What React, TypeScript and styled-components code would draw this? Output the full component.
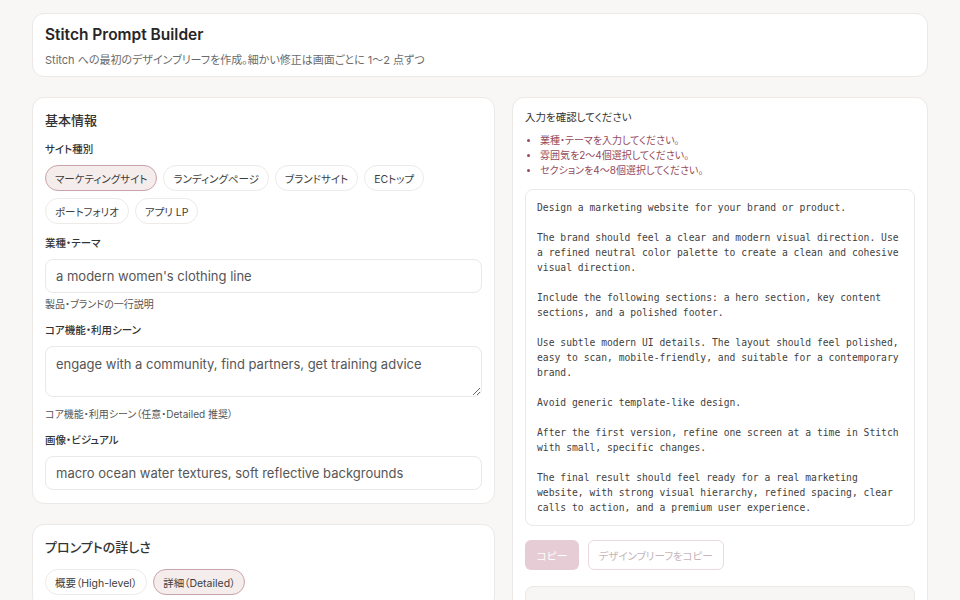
import React, { useState } from 'react';
import styled, { createGlobalStyle } from 'styled-components';

const GlobalStyle = createGlobalStyle`
  * { box-sizing: border-box; }
  body {
    margin: 0;
    background: #f8f7f6;
    font-family: Inter, 'Noto Sans CJK JP', sans-serif;
    color: #2a2a2a;
  }
`;

const siteTypes = ['マーケティングサイト', 'ランディングページ', 'ブランドサイト', 'ECトップ', 'ポートフォリオ', 'アプリ LP'];
const detailLevels = ['概要（High-level）', '詳細（Detailed）'];
const errors = [
  '業種・テーマを入力してください。',
  '雰囲気を2〜4個選択してください。',
  'セクションを4〜8個選択してください。',
];

const prompt = `Design a marketing website for your brand or product.

The brand should feel a clear and modern visual direction. Use
a refined neutral color palette to create a clean and cohesive
visual direction.

Include the following sections: a hero section, key content
sections, and a polished footer.

Use subtle modern UI details. The layout should feel polished,
easy to scan, mobile-friendly, and suitable for a contemporary
brand.

Avoid generic template-like design.

After the first version, refine one screen at a time in Stitch
with small, specific changes.

The final result should feel ready for a real marketing
website, with strong visual hierarchy, refined spacing, clear
calls to action, and a premium user experience.`;

const App = () => {
  const [siteType, setSiteType] = useState('マーケティングサイト');
  const [detail, setDetail] = useState('詳細（Detailed）');

  return (
    <Page>
      <GlobalStyle />
      <Header>
        <Title>Stitch Prompt Builder</Title>
        <Subtitle>Stitch への最初のデザインブリーフを作成。細かい修正は画面ごとに 1〜2 点ずつ</Subtitle>
      </Header>
      <Columns>
        <Stack>
          <Card>
            <SectionTitle>基本情報</SectionTitle>
            <Field>
              <Label>サイト種別</Label>
              <ChipRow>
                {siteTypes.map((t) => (
                  <Chip key={t} $active={t === siteType} onClick={() => setSiteType(t)}>
                    {t}
                  </Chip>
                ))}
              </ChipRow>
            </Field>
            <Field>
              <Label>業種・テーマ</Label>
              <Input defaultValue="a modern women's clothing line" />
              <Help>製品・ブランドの一行説明</Help>
            </Field>
            <Field>
              <Label>コア機能・利用シーン</Label>
              <Textarea defaultValue="engage with a community, find partners, get training advice" />
              <Help>コア機能・利用シーン（任意・Detailed 推奨）</Help>
            </Field>
            <Field>
              <Label>画像・ビジュアル</Label>
              <Input defaultValue="macro ocean water textures, soft reflective backgrounds" />
            </Field>
          </Card>
          <Card>
            <SectionTitle>プロンプトの詳しさ</SectionTitle>
            <ChipRow>
              {detailLevels.map((d) => (
                <Chip key={d} $active={d === detail} onClick={() => setDetail(d)}>
                  {d}
                </Chip>
              ))}
            </ChipRow>
          </Card>
        </Stack>
        <Card>
          <CheckTitle>入力を確認してください</CheckTitle>
          <ErrorList>
            {errors.map((e) => (
              <li key={e}>{e}</li>
            ))}
          </ErrorList>
          <PromptBox>{prompt}</PromptBox>
          <Actions>
            <PrimaryButton disabled>コピー</PrimaryButton>
            <GhostButton disabled>デザインブリーフをコピー</GhostButton>
          </Actions>
          <Tips>
            <TipsTitle>ヒント：一度に変えるのは少しずつ</TipsTitle>
          </Tips>
        </Card>
      </Columns>
    </Page>
  );
};

export default App;

const Page = styled.div`
  padding: 13px 32px 20px;
  display: flex;
  flex-direction: column;
  gap: 20px;
`;

const Header = styled.header`
  background: #fff;
  border: 1px solid #ebe8e5;
  border-radius: 12px;
  padding: 10px 12px 8px;
`;

const Title = styled.h1`
  margin: 0;
  font-size: 15.5px;
  line-height: 22px;
  font-weight: 600;
  color: #262626;
`;

const Subtitle = styled.p`
  margin: 6px 0 0;
  font-size: 11px;
  line-height: 16px;
  color: #6b6b6b;
  font-feature-settings: 'palt';
`;

const Columns = styled.div`
  display: grid;
  grid-template-columns: 463px 1fr;
  gap: 17px;
  align-items: start;
`;

const Stack = styled.div`
  display: flex;
  flex-direction: column;
  gap: 20px;
`;

const Card = styled.section`
  background: #fff;
  border: 1px solid #ebe8e5;
  border-radius: 12px;
  padding: 12px 12px 13px;
`;

const SectionTitle = styled.h2`
  margin: 0 0 12px;
  font-size: 13px;
  line-height: 20px;
  font-weight: 500;
  color: #333;
  font-feature-settings: 'palt';
`;

const Field = styled.div`
  display: flex;
  flex-direction: column;
  & + & {
    margin-top: 12px;
  }
`;

const Label = styled.label`
  font-size: 10.5px;
  line-height: 16px;
  font-weight: 500;
  color: #333;
  margin-bottom: 7px;
  font-feature-settings: 'palt';
`;

const ChipRow = styled.div`
  display: flex;
  flex-wrap: wrap;
  gap: 7px 6px;
`;

const Chip = styled.button<{ $active?: boolean }>`
  height: 26px;
  padding: 0 9px;
  border-radius: 999px;
  border: 1px solid ${(p) => (p.$active ? '#c9a3ab' : '#eeeae7')};
  background: ${(p) => (p.$active ? '#f5ecec' : '#fff')};
  color: #3d3d3d;
  font-family: Inter, 'Noto Sans CJK JP', sans-serif;
  font-size: 10.5px;
  font-feature-settings: 'palt';
  cursor: pointer;
`;

const Input = styled.input`
  height: 34px;
  border: 1px solid #ebe8e5;
  border-radius: 8px;
  padding: 0 10px;
  font-family: Inter, 'Noto Sans CJK JP', sans-serif;
  font-size: 13px;
  color: #565656;
  outline: none;
`;

const Textarea = styled.textarea`
  display: block;
  height: 51px;
  border: 1px solid #ebe8e5;
  border-radius: 8px;
  padding: 8px 10px;
  font-family: Inter, 'Noto Sans CJK JP', sans-serif;
  font-size: 13px;
  line-height: 18px;
  color: #565656;
  outline: none;
  resize: vertical;
  margin-bottom: 6px;
`;

const Help = styled.span`
  margin-top: 4px;
  font-size: 10px;
  line-height: 14px;
  color: #555;
  font-feature-settings: 'palt';
`;

const CheckTitle = styled.h3`
  margin: 0;
  font-size: 10.5px;
  line-height: 16px;
  font-weight: 400;
  color: #333;
  font-feature-settings: 'palt';
`;

const ErrorList = styled.ul`
  margin: 7px 0 0;
  padding: 0 0 0 15px;
  font-size: 10px;
  line-height: 15px;
  color: #954a5c;
  font-feature-settings: 'palt';
  li::marker {
    font-size: 9px;
  }
`;

const PromptBox = styled.pre`
  margin: 11px 0 0;
  padding: 10px 11px;
  border: 1px solid #ebe8e5;
  border-radius: 8px;
  background: #fff;
  font-family: 'DejaVu Sans Mono', 'Liberation Mono', monospace;
  font-size: 9.7px;
  line-height: 15px;
  color: #3f3f3f;
  white-space: pre-wrap;
`;

const Actions = styled.div`
  display: flex;
  gap: 9px;
  margin-top: 14px;
`;

const PrimaryButton = styled.button`
  height: 30px;
  padding: 0 11px;
  border: none;
  border-radius: 6px;
  background: #e6ccd4;
  color: #fff;
  font-family: Inter, 'Noto Sans CJK JP', sans-serif;
  font-size: 10.5px;
`;

const GhostButton = styled.button`
  height: 30px;
  padding: 0 10px;
  border: 1px solid #ecd9de;
  border-radius: 6px;
  background: #fff;
  color: #c6b5ba;
  font-family: Inter, 'Noto Sans CJK JP', sans-serif;
  font-size: 10.5px;
  font-feature-settings: 'palt';
`;

const Tips = styled.div`
  margin-top: 16px;
  padding: 12px 14px;
  border: 1px solid #ebe8e5;
  border-radius: 8px;
  background: #f7f6f5;
`;

const TipsTitle = styled.div`
  font-size: 11px;
  line-height: 16px;
  color: #555;
`;
